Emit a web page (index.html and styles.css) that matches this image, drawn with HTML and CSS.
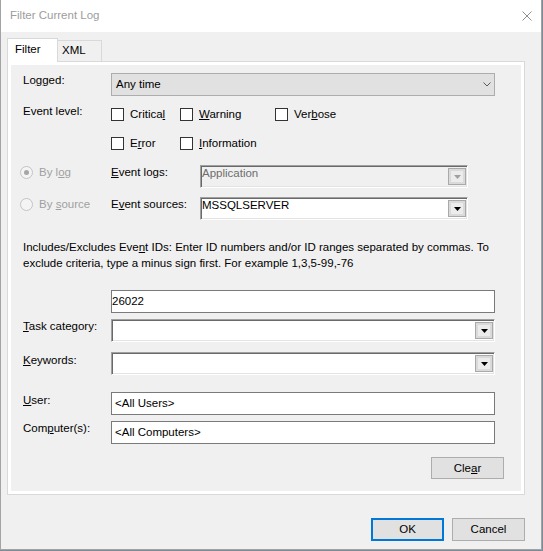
FILE: index.html
```html
<!DOCTYPE html>
<html>
<head>
<meta charset="utf-8">
<title>Filter Current Log</title>
<link rel="stylesheet" href="styles.css">
</head>
<body>
<div class="window">
  <div class="titlebar">
    <span class="title">Filter Current Log</span>
    <svg class="close" width="10" height="10" viewBox="0 0 10 10"><path d="M0.5 0.5L9.5 9.5M9.5 0.5L0.5 9.5" stroke="#8f8f8f" stroke-width="1" fill="none"/></svg>
  </div>
  <div class="tabs">
    <div class="tab active">Filter</div>
    <div class="tab">XML</div>
  </div>
  <div class="panel">
    <div class="page">
      <div class="row">
        <div class="label">Lo<u>g</u>ged:</div>
        <div class="select">
          <span class="select-text">Any time</span>
          <svg class="chev" width="8" height="5" viewBox="0 0 8 5"><path d="M0.5 0.5L4 4L7.5 0.5" stroke="#5a5a5a" stroke-width="1" fill="none"/></svg>
        </div>
      </div>

      <div class="row gap8">
        <div class="label">Event level:</div>
        <div class="checks">
          <div class="cb"><span class="box"></span><span>Critica<u>l</u></span></div>
          <div class="cb"><span class="box"></span><span><u>W</u>arning</span></div>
          <div class="cb"><span class="box"></span><span>Ver<u>b</u>ose</span></div>
          <div class="cb"><span class="box"></span><span>E<u>r</u>ror</span></div>
          <div class="cb"><span class="box"></span><span><u>I</u>nformation</span></div>
        </div>
      </div>

      <div class="row radio-row gap14">
        <div class="rb"><span class="radio checked"></span><span>By l<u>o</u>g</span></div>
        <div class="clabel"><u>E</u>vent logs:</div>
        <div class="combo narrow disabled">
          <span class="combo-text">Application</span>
          <span class="dd"><svg width="7" height="4" viewBox="0 0 7 4"><polygon points="0,0 7,0 3.5,4" fill="#a0a0a0"/></svg></span>
        </div>
      </div>

      <div class="row radio-row gap9">
        <div class="rb"><span class="radio"></span><span>By <u>s</u>ource</span></div>
        <div class="clabel">E<u>v</u>ent sources:</div>
        <div class="combo narrow">
          <span class="combo-text">MSSQLSERVER</span>
          <span class="dd"><svg width="7" height="4" viewBox="0 0 7 4"><polygon points="0,0 7,0 3.5,4" fill="#000"/></svg></span>
        </div>
      </div>

      <div class="desc">Includes/Excludes Eve<u>n</u>t IDs: Enter ID numbers and/or ID ranges separated by commas. To<br>exclude criteria, type a minus sign first. For example 1,3,5-99,-76</div>

      <div class="row gap19">
        <div class="label"></div>
        <div class="input ids">26022</div>
      </div>

      <div class="row gap6">
        <div class="label"><u>T</u>ask category:</div>
        <div class="combo">
          <span class="combo-text"></span>
          <span class="dd"><svg width="7" height="4" viewBox="0 0 7 4"><polygon points="0,0 7,0 3.5,4" fill="#000"/></svg></span>
        </div>
      </div>

      <div class="row gap10">
        <div class="label down1"><u>K</u>eywords:</div>
        <div class="combo">
          <span class="combo-text"></span>
          <span class="dd"><svg width="7" height="4" viewBox="0 0 7 4"><polygon points="0,0 7,0 3.5,4" fill="#000"/></svg></span>
        </div>
      </div>

      <div class="row gap17">
        <div class="label down1"><u>U</u>ser:</div>
        <div class="input">&lt;All Users&gt;</div>
      </div>

      <div class="row gap6">
        <div class="label">Com<u>p</u>uter(s):</div>
        <div class="input">&lt;All Computers&gt;</div>
      </div>

      <div class="clear-row">
        <div class="btn clear"><span>Cle<u>a</u>r</span></div>
      </div>
    </div>
  </div>
  <div class="footer">
    <div class="btn default">OK</div>
    <div class="btn">Cancel</div>
  </div>
</div>
</body>
</html>
```

FILE: styles.css
```css
* { box-sizing: border-box; }
html, body { margin: 0; padding: 0; }
body {
  background: #7d8b96;
  font-family: "Liberation Sans", Arial, sans-serif;
  font-size: 11.5px;
  line-height: 15px;
  color: #000;
}
u { text-decoration: underline; text-underline-offset: 1px; }

.window {
  width: 542px;
  height: 550px;
  border: 1px solid #a3a3a3;
  border-top: 0;
  background: #f0f0f0;
  display: flex;
  flex-direction: column;
}

.titlebar {
  height: 32px;
  flex: none;
  background: #fff;
  display: flex;
  justify-content: space-between;
  align-items: flex-start;
  padding: 8px 9px 0 9px;
}
.title { color: #9d9d9d; }
.close { margin-top: 3px; }

.tabs {
  height: 29px;
  flex: none;
  display: flex;
  align-items: flex-end;
  padding-left: 6px;
}
.tab {
  height: 21px;
  width: 44px;
  border: 1px solid #d9d9d9;
  border-left: 0;
  border-bottom: 0;
  padding: 2px 0 0 4px;
  background: #f0f0f0;
}
.tab.active {
  position: relative;
  z-index: 1;
  height: 24px;
  width: 51px;
  margin-bottom: -1px;
  border-left: 1px solid #d9d9d9;
  background: #fff;
  padding: 3px 0 0 7px;
}

.panel {
  margin-left: 6px;
  width: 518px;
  flex: none;
  border: 1px solid #d9d9d9;
  background: #fff;
  padding: 3px;
}
.page {
  background: #f0f0f0;
  padding: 8px 17px 12px 12px;
  display: flex;
  flex-direction: column;
}

.row {
  display: flex;
  align-items: flex-start;
  margin-right: 9px;
}
.gap6 { margin-top: 6px; }
.gap8 { margin-top: 8px; }
.gap9 { margin-top: 9px; }
.gap10 { margin-top: 10px; }
.gap14 { margin-top: 14px; }
.gap17 { margin-top: 17px; }
.gap19 { margin-top: 19px; }

.label { width: 88px; flex: none; height: 15px; }
.down1 { margin-top: 1px; }

.select {
  flex: 1;
  height: 23px;
  background: #e1e1e1;
  border: 1px solid #adadad;
  display: flex;
  align-items: center;
  padding: 0 3px 0 4px;
}
.select-text { flex: 1; }

.checks {
  margin-top: 3px;
  display: grid;
  grid-template-columns: 69px 95px auto;
  row-gap: 14px;
}
.cb { display: flex; align-items: center; height: 15px; white-space: nowrap; }
.box {
  width: 13px;
  height: 13px;
  border: 1px solid #333;
  background: #fff;
  margin-right: 6px;
  flex: none;
}

.radio-row { margin-left: -3px; }
.rb {
  width: 91px;
  flex: none;
  display: flex;
  align-items: center;
  height: 15px;
  color: #a0a0a0;
  white-space: nowrap;
}
.radio {
  width: 13px;
  height: 13px;
  border-radius: 50%;
  border: 1px solid #c4c4c4;
  background: #f4f4f4;
  margin-right: 6px;
  flex: none;
  display: flex;
  align-items: center;
  justify-content: center;
}
.radio.checked::after {
  content: "";
  width: 5px;
  height: 5px;
  border-radius: 50%;
  background: #a6a6a6;
}
.clabel { width: 89px; flex: none; height: 15px; }

.combo {
  flex: 1;
  height: 23px;
  display: flex;
  align-items: center;
  border: 1px solid;
  border-color: #a0a0a0 #fff #fff #a0a0a0;
  box-shadow: inset 1px 1px 0 #696969, inset -1px -1px 0 #e3e3e3;
  padding: 1px;
  background: #fff;
}
.combo.narrow { flex: none; width: 268px; }
.combo.disabled { background: #f0f0f0; color: #6d6d6d; }
.combo-text {
  flex: 1;
  align-self: flex-start;
  line-height: 12px;
  white-space: nowrap;
}
.dd {
  width: 18px;
  height: 17px;
  flex: none;
  border: 1px solid #a9a9a9;
  box-shadow: inset 0 0 0 2px #dadada;
  background: #ececec;
  display: flex;
  align-items: center;
  justify-content: center;
}
.dd svg { display: block; margin-top: 1px; }

.desc {
  margin-top: 19px;
  line-height: 16px;
  white-space: nowrap;
}

.input {
  flex: 1;
  height: 23px;
  background: #fff;
  border: 1px solid #7a7a7a;
  display: flex;
  align-items: center;
  padding-left: 3px;
}
.input.ids { padding-left: 0; }

.clear-row {
  margin-top: 13px;
  display: flex;
  justify-content: flex-end;
}

.btn {
  width: 73px;
  height: 23px;
  background: #e1e1e1;
  border: 1px solid #adadad;
  display: flex;
  align-items: center;
  justify-content: center;
}
.btn.clear { height: 22px; }
.btn.default { border: 2px solid #0078d7; }

.footer {
  margin-top: 23px;
  display: flex;
  justify-content: flex-end;
  gap: 8px;
  padding-right: 16px;
}
```
